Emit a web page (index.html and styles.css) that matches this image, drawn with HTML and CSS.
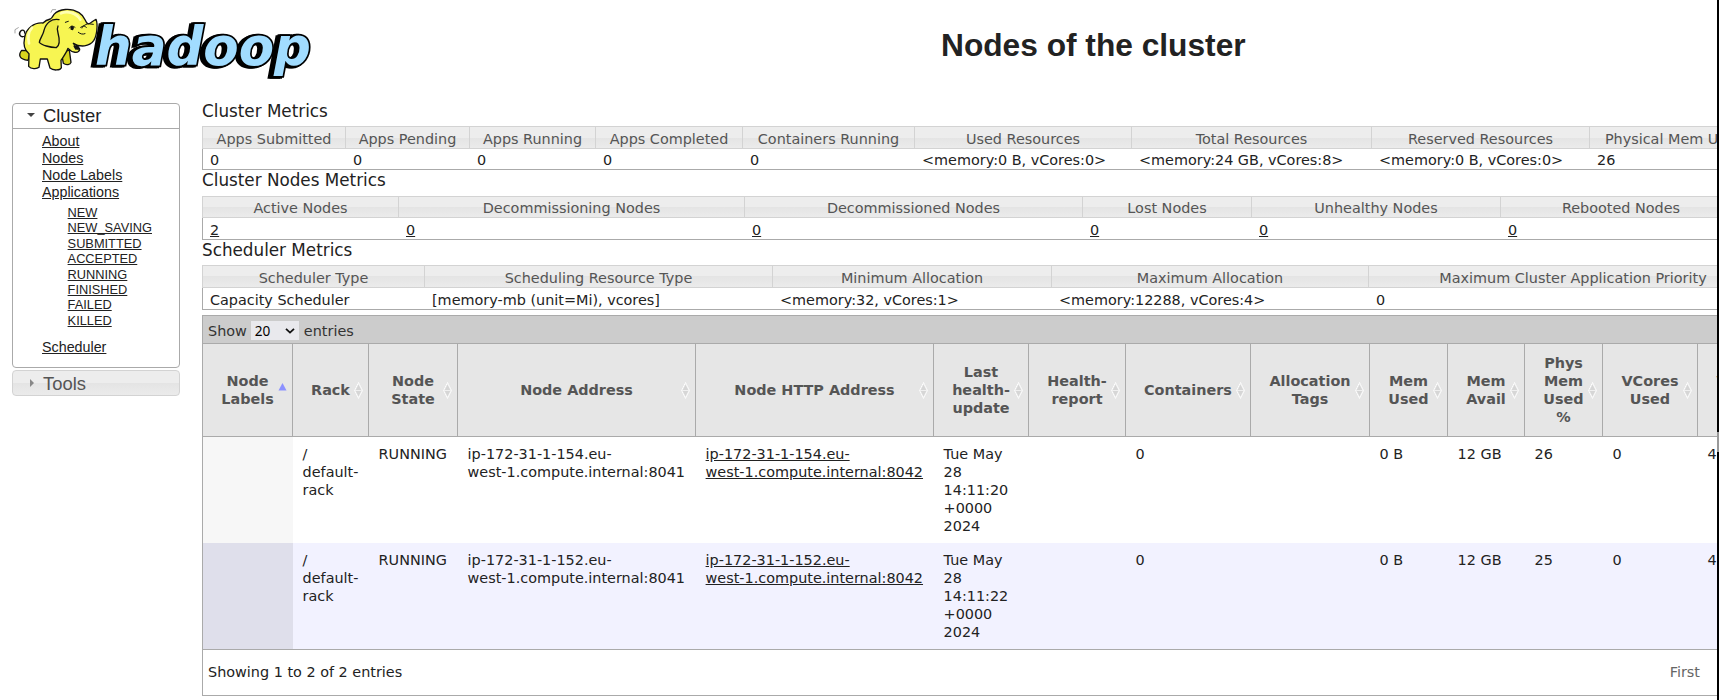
FILE: index.html
```html
<!DOCTYPE html>
<html lang="en">
<head>
<meta charset="utf-8">
<title>Nodes of the cluster</title>
<link rel="stylesheet" href="styles.css">
</head>
<body>
<svg class="defs" width="0" height="0">
  <symbol id="sort" viewBox="0 0 9 17">
    <path d="M4.5 .5L8.5 8.5L4.5 16.5L.5 8.5Z" fill="#fff" fill-opacity=".4" stroke="#fff" stroke-width="1" stroke-dasharray="1.6 .6"/>
    <path d="M4.5 2.5L7.3 8H1.7ZM4.5 14.5L7.3 9H1.7Z" fill="#d6d6d6"/>
  </symbol>
</svg>
<div class="page">
  <header class="header">
    <svg class="logo" width="320" height="80" viewBox="0 0 320 80">
      <text class="wordmark" x="95" y="65" textLength="216" lengthAdjust="spacingAndGlyphs">hadoop</text>
      <g transform="scale(.33333)" stroke="#111" stroke-width="4" stroke-linejoin="round" stroke-linecap="round" fill="#f7f552">
        <path d="M76 108C61 115 53 102 63 92C67 88 76 92 74 99" fill="none" stroke-width="4"/>
        <path d="M65 151C54 165 58 178 84 181L93 152ZM184 156L190 190C199 197 211 194 213 187L208 150Z" fill="#d8d51e"/>
        <path d="M129 69C103 67 78 84 74 112C69 135 74 151 87 161L86 199C93 207 110 208 117 202L121 177H142L150 204C160 213 181 211 184 203L183 181C191 169 199 159 204 145C216 158 235 162 239 149C240 142 230 137 220 130C241 143 268 140 281 122C291 107 294 73 288 58C278 62 269 75 263 71C253 64 258 51 237 38C212 23 178 26 162 43C158 49 156 55 151 57C143 59 135 63 129 69Z"/>
        <path d="M177 59C154 55 138 69 132 91C130 104 120 114 118 127C125 136 150 142 169 143C183 134 177 110 174 99C171 90 170 86 174 78" fill="#ecea45"/>
        <path d="M96 83C83 95 84 118 87 130" fill="none" stroke="#ffffb5" stroke-width="8"/>
        <path d="M183 40C202 31 230 39 241 59" fill="none" stroke="#ffffb0" stroke-width="8"/>
        <path d="M196 67L205 64M208 84C213 76 218 77 225 82M246 84C248 76 254 78 259 82M235 97C241 102 248 104 255 101M242 82L263 71L280 73M222 131C223 144 229 148 239 150" fill="none" stroke-width="3"/>
        <path d="M211 82C213 76 221 77 222 84L219 91L212 89ZM220 138C230 134 237 141 239 147L226 149Z" fill="#111" stroke="none"/>
        <path d="M153 37L157 29L167 29M45 99V89L55 83" fill="none" stroke="#777" stroke-width="2"/>
      </g>
    </svg>
    <h1 class="title">Nodes of the cluster</h1>
  </header>
  <div class="body">
    <nav class="nav">
      <section class="panel">
        <h3 class="panel-head"><svg class="tri" width="8" height="8"><path d="M0 2H8L4 6Z" fill="#444"/></svg>Cluster</h3>
        <ul class="links">
          <li><a>About</a></li><li><a>Nodes</a></li><li><a>Node Labels</a></li>
          <li><a>Applications</a>
            <ul class="sub"><li><a>NEW</a></li><li><a>NEW_SAVING</a></li><li><a>SUBMITTED</a></li><li><a>ACCEPTED</a></li><li><a>RUNNING</a></li><li><a>FINISHED</a></li><li><a>FAILED</a></li><li><a>KILLED</a></li></ul>
          </li>
          <li><a>Scheduler</a></li>
        </ul>
      </section>
      <h3 class="tools"><svg class="tri" width="8" height="8"><path d="M3 0V8L7 4Z" fill="#888"/></svg>Tools</h3>
    </nav>
    <main class="main">
      <h3 class="caption c1">Cluster Metrics</h3>
      <table class="metrics m1">
        <colgroup><col style="width:143px"><col style="width:124px"><col style="width:126px"><col style="width:147px"><col style="width:172px"><col style="width:217px"><col style="width:240px"><col style="width:218px"><col style="width:188px"></colgroup>
        <thead><tr><th>Apps Submitted</th><th>Apps Pending</th><th>Apps Running</th><th>Apps Completed</th><th>Containers Running</th><th>Used Resources</th><th>Total Resources</th><th>Reserved Resources</th><th>Physical Mem Used %</th></tr></thead>
        <tbody><tr><td>0</td><td>0</td><td>0</td><td>0</td><td>0</td><td>&lt;memory:0 B, vCores:0&gt;</td><td>&lt;memory:24 GB, vCores:8&gt;</td><td>&lt;memory:0 B, vCores:0&gt;</td><td>26</td></tr></tbody>
      </table>
      <h3 class="caption c2">Cluster Nodes Metrics</h3>
      <table class="metrics m2">
        <colgroup><col style="width:196px"><col style="width:346px"><col style="width:338px"><col style="width:169px"><col style="width:249px"><col style="width:241px"></colgroup>
        <thead><tr><th>Active Nodes</th><th>Decommissioning Nodes</th><th>Decommissioned Nodes</th><th>Lost Nodes</th><th>Unhealthy Nodes</th><th>Rebooted Nodes</th></tr></thead>
        <tbody><tr><td><a>2</a></td><td><a>0</a></td><td><a>0</a></td><td><a>0</a></td><td><a>0</a></td><td><a>0</a></td></tr></tbody>
      </table>
      <h3 class="caption c3">Scheduler Metrics</h3>
      <table class="metrics m3">
        <colgroup><col style="width:222px"><col style="width:348px"><col style="width:279px"><col style="width:317px"><col style="width:409px"></colgroup>
        <thead><tr><th>Scheduler Type</th><th>Scheduling Resource Type</th><th>Minimum Allocation</th><th>Maximum Allocation</th><th>Maximum Cluster Application Priority</th></tr></thead>
        <tbody><tr><td>Capacity Scheduler</td><td>[memory-mb (unit=Mi), vcores]</td><td>&lt;memory:32, vCores:1&gt;</td><td>&lt;memory:12288, vCores:4&gt;</td><td>0</td></tr></tbody>
      </table>
      <div class="nodes">
        <div class="toolbar">Show <span class="select">20<svg width="10" height="6"><path d="M1 .8L5 4.6L9 .8" fill="none" stroke="#111" stroke-width="1.8"/></svg></span> entries</div>
        <table class="grid">
          <colgroup><col style="width:90px"><col style="width:76px"><col style="width:89px"><col style="width:238px"><col style="width:238px"><col style="width:95px"><col style="width:97px"><col style="width:125px"><col style="width:119px"><col style="width:78px"><col style="width:77px"><col style="width:78px"><col style="width:95px"><col style="width:95px"></colgroup>
          <thead><tr>
            <th>Node<br>Labels<svg class="sort asc" width="9" height="17"><path d="M4.5 1L8.5 8.5H.5Z" fill="#8c91ff"/></svg></th>
            <th>Rack<svg class="sort"><use href="#sort"/></svg></th>
            <th>Node<br>State<svg class="sort"><use href="#sort"/></svg></th>
            <th>Node Address<svg class="sort"><use href="#sort"/></svg></th>
            <th>Node HTTP Address<svg class="sort"><use href="#sort"/></svg></th>
            <th>Last<br>health-<br>update<svg class="sort"><use href="#sort"/></svg></th>
            <th>Health-<br>report<svg class="sort"><use href="#sort"/></svg></th>
            <th>Containers<svg class="sort"><use href="#sort"/></svg></th>
            <th>Allocation<br>Tags<svg class="sort"><use href="#sort"/></svg></th>
            <th>Mem<br>Used<svg class="sort"><use href="#sort"/></svg></th>
            <th>Mem<br>Avail<svg class="sort"><use href="#sort"/></svg></th>
            <th>Phys<br>Mem<br>Used<br>%<svg class="sort"><use href="#sort"/></svg></th>
            <th>VCores<br>Used<svg class="sort"><use href="#sort"/></svg></th>
            <th>VCores<br>Avail</th>
          </tr></thead>
          <tbody>
            <tr class="odd"><td></td><td>/<br>default-<br>rack</td><td>RUNNING</td><td>ip-172-31-1-154.eu-<br>west-1.compute.internal:8041</td><td><a>ip-172-31-1-154.eu-<br>west-1.compute.internal:8042</a></td><td>Tue May<br>28<br>14:11:20<br>+0000<br>2024</td><td></td><td>0</td><td></td><td>0 B</td><td>12 GB</td><td>26</td><td>0</td><td>4</td></tr>
            <tr class="even"><td></td><td>/<br>default-<br>rack</td><td>RUNNING</td><td>ip-172-31-1-152.eu-<br>west-1.compute.internal:8041</td><td><a>ip-172-31-1-152.eu-<br>west-1.compute.internal:8042</a></td><td>Tue May<br>28<br>14:11:22<br>+0000<br>2024</td><td></td><td>0</td><td></td><td>0 B</td><td>12 GB</td><td>25</td><td>0</td><td>4</td></tr>
          </tbody>
        </table>
        <div class="footer"><span>Showing 1 to 2 of 2 entries</span><span class="first">First</span></div>
      </div>
    </main>
  </div>
</div>
<div class="edge"><div class="thumb"></div></div>
</body>
</html>
```
FILE: styles.css
```css
* { box-sizing: border-box; }
body {
  margin: 0;
  height: 700px;
  display: flex;
  overflow: hidden;
  background: #fff;
  color: #222;
  font: 14.4px/18px "DejaVu Sans", sans-serif;
}
a { text-decoration: underline; color: #222; }
h1, h3, ul { margin: 0; padding: 0; font-weight: normal; }
ul { list-style: none; }
.defs { position: absolute; }
.page { width: 1717px; height: 700px; overflow: hidden; }
.edge { width: 2px; height: 700px; background: #000; padding-top: 432px; }
.thumb { height: 20px; background: #999; }

.header { display: flex; height: 103px; }
.logo { flex: none; }
.wordmark {
  font: italic bold 54px "DejaVu Sans", sans-serif;
  fill: #a1dcff;
  stroke: #000;
  stroke-width: 3.6px;
  stroke-linejoin: miter;
  paint-order: stroke;
  filter: drop-shadow(-2px 0 0 #000) drop-shadow(-2px 1px 0 #000);
}
.title {
  flex: none;
  width: 631px;
  margin-left: 621px;
  padding-top: 25px;
  font: bold 31.7px/40px "Liberation Sans", sans-serif;
}
.body { display: flex; }

.nav {
  flex: none;
  width: 168px;
  margin-left: 12px;
  font: 14.3px/17px "Liberation Sans", sans-serif;
}
.panel { height: 265px; border: 1px solid #aaa; border-radius: 4px; }
.panel-head, .tools { display: flex; align-items: center; font-size: 18.4px; line-height: 25px; }
.panel-head { height: 25px; padding-bottom: 2px; border-bottom: 1px solid #aaa; }
.tri { margin: 0 8px 0 14px; }
.links { padding: 4px 0 0 29px; }
.sub { padding: 4px 0 11px 25.6px; font-size: 12.8px; line-height: 15.4px; }
.tools {
  height: 26px;
  margin-top: 2px;
  border: 1px solid #d3d3d3;
  border-radius: 4px;
  color: #555;
  background: linear-gradient(#ededed 0 50%, #e4e4e4 50%, #ebebeb);
}

.main { flex: none; width: 1575px; margin-left: 22px; }
.caption { font-size: 16.8px; line-height: 20px; }
.c1 { height: 23px; line-height: 16px; }
.c2 { height: 26px; }
.c3 { height: 25px; }
table { table-layout: fixed; border-collapse: separate; border-spacing: 0; }
.metrics { border-bottom: 1px solid #aaa; }
.metrics.m1 { width: 1575px; }
.metrics.m2 { width: 1539px; }
.metrics.m3 { width: 1575px; }
.metrics th {
  height: 23px;
  padding: 2px 0 0;
  border: 1px solid #d3d3d3;
  border-right: 0;
  font-weight: normal;
  line-height: 18px;
  color: #555;
  background: linear-gradient(#ededed 0 50%, #e4e4e4 50%, #ebebeb);
}
.metrics td { height: 20px; padding: 2px 0 0 7px; border-left: 1px solid transparent; line-height: 17px; }
.metrics td:first-child { border-left-color: #aaa; }
.metrics.m2 th { height: 22px; padding-top: 1px; }
.metrics.m2 td, .metrics.m3 td { height: 21px; padding-top: 3px; }

.nodes { width: 1575px; margin-top: 5px; border: 1px solid #aaa; }
.toolbar { display: flex; align-items: center; height: 27px; padding: 2px 0 0 5px; background: #ccc; color: #333; }
.select {
  display: flex;
  align-items: center;
  justify-content: space-between;
  width: 48px;
  height: 19px;
  margin: 0 5px 0 4px;
  padding: 0 4px;
  background: #e9e9ed;
  color: #000;
  font: 13.6px "Noto Sans", sans-serif;
}
.grid { width: 1590px; }
.grid th {
  position: relative;
  height: 94px;
  padding: 0;
  border: solid #aaa;
  border-width: 1px 1px 1px 0;
  background: #e6e6e6;
  color: #555;
}
.sort { position: absolute; right: 5px; top: 38px; width: 9px; height: 17px; }
.grid td { height: 106px; padding: 8px 0 8px 9.6px; vertical-align: top; white-space: nowrap; }
.odd td:first-child { background: #f7f7f7; }
.even td { background: #f2f2ff; }
.even td:first-child { background: #dfdfeb; }
.footer {
  display: flex;
  justify-content: space-between;
  height: 46px;
  padding: 13px 76px 0 5px;
  border-top: 1px solid #aaa;
}
.first { color: #666; }
```
